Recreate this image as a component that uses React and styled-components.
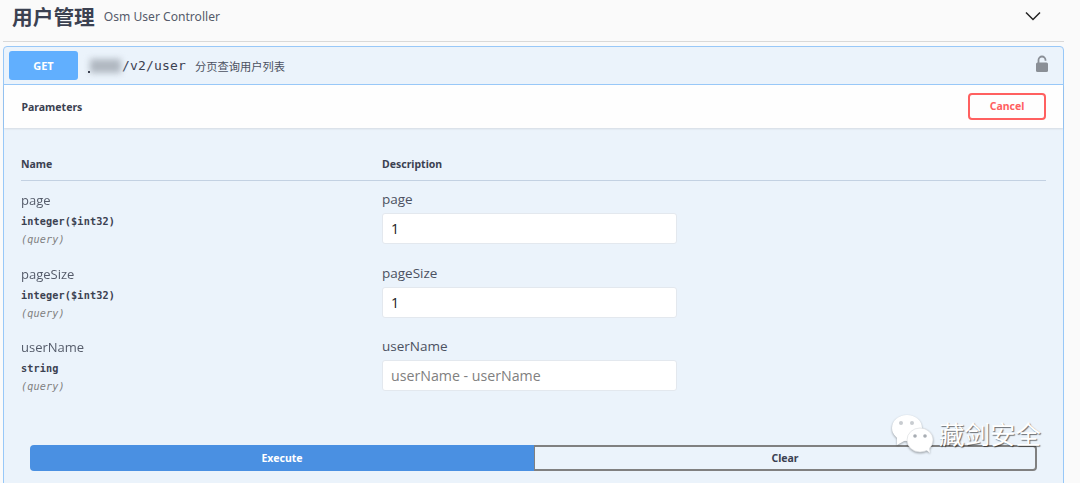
import React from "react";
import styled, { createGlobalStyle } from "styled-components";

const Global = createGlobalStyle`
  html, body { margin: 0; padding: 0; background: #fafafa; overflow: hidden; }
  body { font-family: "Open Sans", "Noto Sans CJK SC", sans-serif; }
`;
const Page = styled.div`
  width: 1080px; height: 483px; overflow: hidden; position: relative;
  padding-left: 3px; box-sizing: border-box;
`;
const Section = styled.div`width: 1061px;`;
const TagBar = styled.div`
  height: 42px; box-sizing: border-box; border-bottom: 1px solid #d9d9d9;
  display: flex; align-items: center; padding: 0 9px 8px; position: relative;
`;
const TagTitle = styled.span`
  font: 700 20.7px/34px "Noto Sans CJK SC", sans-serif; color: #3b4151; margin-bottom: 2px;
`;
const TagNote = styled.span`
  font: 400 12.1px "Noto Sans", sans-serif; color: #555b6a; margin-left: 9px;
`;
const Chevron = styled.svg`
  position: absolute; left: 1022px; top: 10px; width: 16px; height: 12px;
`;
const Block = styled.div`
  margin-top: 4px; height: 500px; box-sizing: border-box; background: #ebf3fb;
  border: 1px solid #98c8f8; border-radius: 4px 4px 0 0;
`;
const Summary = styled.div`
  height: 38px; box-sizing: border-box; display: flex; align-items: center;
  padding: 0 5px; border-bottom: 1px solid #98c8f8; position: relative;
`;
const Method = styled.div`
  width: 69px; height: 29px; border-radius: 3px; background: #61affe; color: #fff;
  font: 700 11px/29px "Noto Sans", sans-serif; text-align: center; flex: none;
`;
const Path = styled.span`
  font: 500 13px "DejaVu Sans Mono", monospace; color: #3b4151; margin-left: 44px; letter-spacing: .17px;
`;
const Smudge = styled.div`
  position: absolute; left: 86px; top: 12px; width: 31px; height: 14px;
  background: #b0b8c1; filter: blur(3px);
`;
const Dot = styled.span`
  position: absolute; left: 84px; top: 24px; width: 2px; height: 2px; background: #3b4151;
`;
const SummaryText = styled.span`
  font: 400 11.25px "Noto Sans CJK SC", sans-serif; color: #4b5161; margin-left: 9px;
`;
const Lock = styled.svg`
  position: absolute; left: 1031px; top: 8px; width: 14px; height: 18px;
`;
const ParamsBar = styled.div`
  height: 43px; box-sizing: border-box; background: #fefefe; display: flex;
  align-items: center; justify-content: space-between; padding: 0 17px 0 17.5px;
  box-shadow: 0 1px 2px rgba(0,0,0,.1);
`;
const BarTitle = styled.span`
  font: 700 10.5px "Noto Sans", sans-serif; color: #3b4151;
`;
const CancelBtn = styled.div`
  width: 78px; height: 27px; box-sizing: border-box; border: 2px solid #ff6060; border-radius: 4px;
  color: #ff6060; font: 700 10.5px/23px "Noto Sans", sans-serif; text-align: center;
`;
const Body = styled.div`padding: 30px 17px 0;`;
const Head = styled.div`
  display: grid; grid-template-columns: 361px 1fr; height: 22px;
  border-bottom: 1px solid #c3d1e2;
`;
const HeadCell = styled.span`
  font: 700 10.5px/12px "Noto Sans", sans-serif; color: #3b4151;
`;
const Row = styled.div`
  display: grid; grid-template-columns: 361px 1fr; height: 73.5px;
`;
const Rows = styled.div`padding-top: 9px;`;
const NameCol = styled.div`display: flex; flex-direction: column;`;
const ParamName = styled.span`
  font: 400 13px/20px "Open Sans", sans-serif; color: #3b4151; opacity: .85;
`;
const ParamType = styled.span`
  font: 600 10.2px/18px "DejaVu Sans Mono", monospace; color: #3b4151; margin-top: 3px;
  letter-spacing: .13px;
`;
const ParamIn = styled.span`
  font: italic 400 10.2px/18px "DejaVu Sans Mono", monospace; color: #808080;
  letter-spacing: .13px;
`;
const DescCol = styled.div`display: flex; flex-direction: column;`;
const DescLabel = styled.span`
  font: 400 13.5px/18px "Open Sans", sans-serif; color: #4b5161;
`;
const Field = styled.div`
  width: 295px; height: 31px; margin-top: 5px; box-sizing: border-box; background: #fff;
  border: 1px solid #e3e8ee; border-radius: 3px; padding-left: 8px;
  font: 400 14.2px/29px "Open Sans", sans-serif; color: ${p => p.$ph ? "#808080" : "#222"};
`;
const Actions = styled.div`
  display: flex; margin: 34px 0 0 9px; width: 1007px;
`;
const ExecuteBtn = styled.div`
  width: 504px; height: 26px; background: #4a90e2; color: #fff; border-radius: 4px 0 0 4px;
  font: 700 10.5px/26px "Noto Sans", sans-serif; text-align: center;
`;
const ClearBtn = styled.div`
  flex: 1; height: 26px; box-sizing: border-box; border: 2px solid #808080; border-left-width: 1px;
  border-radius: 0 4px 4px 0; color: #3b4151;
  font: 700 10.5px/22px "Noto Sans", sans-serif; text-align: center;
`;
const Watermark = styled.div`
  position: absolute; left: 891px; top: 414px; display: flex; align-items: center;
`;
const WeChat = styled.svg`width: 44px; height: 40px; flex: none; filter: drop-shadow(0 1px 1px rgba(0,0,0,.35));`;
const MarkText = styled.span`
  font: 400 25.5px "Noto Sans CJK SC", sans-serif; color: #fff; margin: 0 0 3px 4px;
  text-shadow: 1px 1px 1px rgba(0,0,0,.55);
`;

const params = [
  { name: "page", type: "integer($int32)", value: "1" },
  { name: "pageSize", type: "integer($int32)", value: "1" },
  { name: "userName", type: "string", ph: "userName - userName" },
];

export default function App() {
  return (
    <Page>
      <Global />
      <Section>
        <TagBar>
          <TagTitle>用户管理</TagTitle>
          <TagNote>Osm User Controller</TagNote>
          <Chevron viewBox="0 0 16 12"><path d="M1 2.5 L8 9.5 L15 2.5" fill="none" stroke="#222" strokeWidth="1.5" /></Chevron>
        </TagBar>
        <Block>
          <Summary>
            <Method>GET</Method>
            <Smudge /><Dot />
            <Path>/v2/user</Path>
            <SummaryText>分页查询用户列表</SummaryText>
            <Lock viewBox="0 0 14 18">
              <path d="M3.5 8V5a3.5 3.5 0 0 1 7 0v.8" fill="none" stroke="#8a8f96" strokeWidth="1.8" />
              <rect x="1" y="7.5" width="12" height="9.5" rx="1.5" fill="#8a8f96" />
            </Lock>
          </Summary>
          <ParamsBar>
            <BarTitle>Parameters</BarTitle>
            <CancelBtn>Cancel</CancelBtn>
          </ParamsBar>
          <Body>
            <Head><HeadCell>Name</HeadCell><HeadCell>Description</HeadCell></Head>
            <Rows>
              {params.map(p => (
                <Row key={p.name}>
                  <NameCol>
                    <ParamName>{p.name}</ParamName>
                    <ParamType>{p.type}</ParamType>
                    <ParamIn>(query)</ParamIn>
                  </NameCol>
                  <DescCol>
                    <DescLabel>{p.name}</DescLabel>
                    <Field $ph={!!p.ph}>{p.ph || p.value}</Field>
                  </DescCol>
                </Row>
              ))}
            </Rows>
            <Actions>
              <ExecuteBtn>Execute</ExecuteBtn>
              <ClearBtn>Clear</ClearBtn>
            </Actions>
          </Body>
        </Block>
      </Section>
      <Watermark>
        <WeChat viewBox="0 0 44 40">
          <ellipse cx="16" cy="14" rx="15" ry="13" fill="#fff" />
          <path d="M6 22 L6 31 L15 26 Z" fill="#fff" />
          <circle cx="10" cy="9" r="2" fill="#c8ccd0" /><circle cx="21" cy="9" r="2" fill="#c8ccd0" />
          <ellipse cx="29" cy="26" rx="13" ry="12" fill="#fff" stroke="#d5d8dc" strokeWidth=".6" />
          <path d="M34 35 L39 39 L38 32 Z" fill="#fff" />
          <circle cx="24" cy="22" r="1.8" fill="#a8adb3" /><circle cx="34" cy="22" r="1.8" fill="#a8adb3" />
        </WeChat>
        <MarkText>藏剑安全</MarkText>
      </Watermark>
    </Page>
  );
}
